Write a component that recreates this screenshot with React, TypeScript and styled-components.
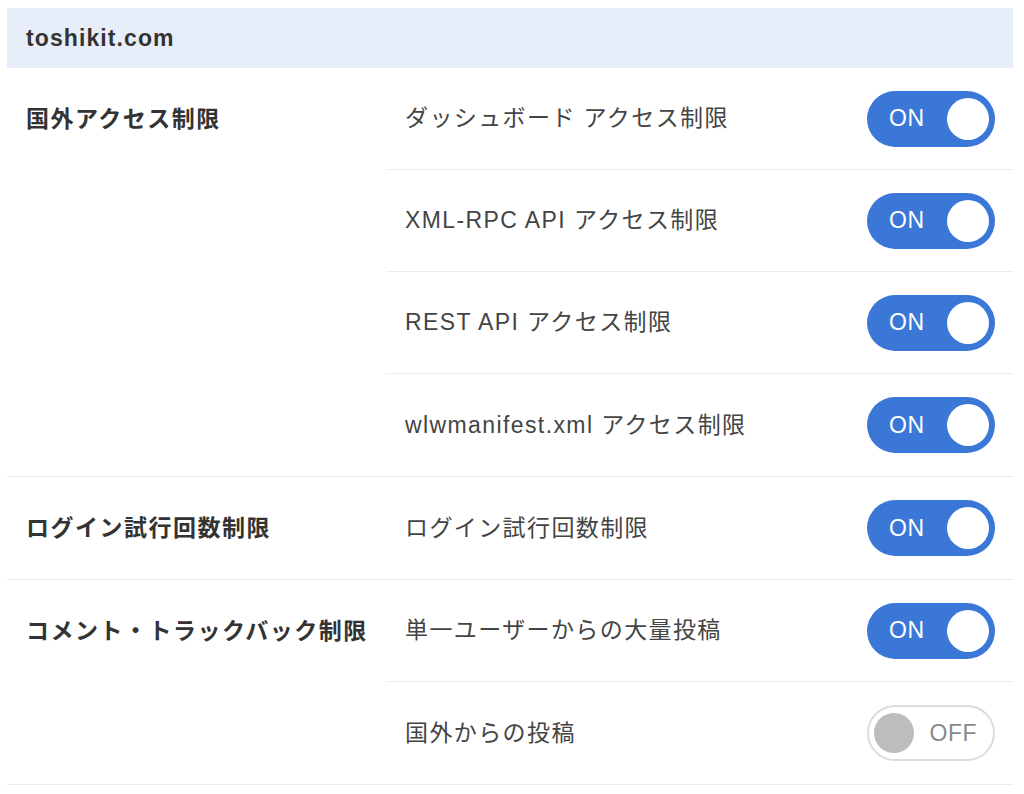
import React from 'react';
import styled, { createGlobalStyle } from 'styled-components';

const GlobalStyle = createGlobalStyle`
  body {
    margin: 0;
    background: #fff;
    font-family: "Liberation Sans", "Noto Sans CJK JP", sans-serif;
  }
`;

type Item = { label: string; on: boolean };
type Group = { title: string; items: Item[] };

const groups: Group[] = [
  {
    title: '国外アクセス制限',
    items: [
      { label: 'ダッシュボード アクセス制限', on: true },
      { label: 'XML-RPC API アクセス制限', on: true },
      { label: 'REST API アクセス制限', on: true },
      { label: 'wlwmanifest.xml アクセス制限', on: true },
    ],
  },
  {
    title: 'ログイン試行回数制限',
    items: [{ label: 'ログイン試行回数制限', on: true }],
  },
  {
    title: 'コメント・トラックバック制限',
    items: [
      { label: '単一ユーザーからの大量投稿', on: true },
      { label: '国外からの投稿', on: false },
    ],
  },
];

function Toggle({ on }: { on: boolean }) {
  return (
    <Switch $on={on}>
      <SwitchText $on={on}>{on ? 'ON' : 'OFF'}</SwitchText>
      <Knob $on={on} />
    </Switch>
  );
}

function App() {
  return (
    <>
      <GlobalStyle />
      <Panel>
        <Header>toshikit.com</Header>
        {groups.map((g) => (
          <Section key={g.title}>
            <GroupTitle>{g.title}</GroupTitle>
            <Items>
              {g.items.map((it) => (
                <Row key={it.label}>
                  <RowLabel>{it.label}</RowLabel>
                  <Toggle on={it.on} />
                </Row>
              ))}
            </Items>
          </Section>
        ))}
      </Panel>
    </>
  );
}

const Panel = styled.div`
  width: 1006px;
  margin: 8px 0 0 7px;
`;

const Header = styled.div`
  height: 60px;
  display: flex;
  align-items: center;
  padding-left: 19px;
  background: #e8eef9;
  color: #333;
  font-size: 23px;
  font-weight: bold;
  letter-spacing: 1.1px;
`;

const Section = styled.div`
  display: grid;
  grid-template-columns: 379px 1fr;
  border-bottom: 1px solid #ececec;
`;

const GroupTitle = styled.div`
  box-sizing: border-box;
  height: 102px;
  display: flex;
  align-items: center;
  padding: 0 0 5px 19px;
  color: #333;
  font-size: 23px;
  font-weight: bold;
  letter-spacing: 1.5px;
`;

const Items = styled.div`
  display: flex;
  flex-direction: column;
`;

const Row = styled.div`
  box-sizing: border-box;
  height: 102px;
  display: flex;
  align-items: center;
  justify-content: space-between;
  padding: 0 18px 0 19px;
  border-bottom: 1px solid #ececec;

  &:last-child {
    border-bottom: none;
  }
`;

const RowLabel = styled.span`
  color: #444;
  font-size: 23px;
  letter-spacing: 1.4px;
  margin-bottom: 5px;
`;

const Switch = styled.div<{ $on: boolean }>`
  box-sizing: border-box;
  width: 128px;
  height: 56px;
  border-radius: 28px;
  display: flex;
  align-items: center;
  flex-direction: ${(p) => (p.$on ? 'row' : 'row-reverse')};
  justify-content: space-between;
  padding: ${(p) => (p.$on ? '0 6px 0 22px' : '0 16px 0 5px')};
  background: ${(p) => (p.$on ? '#3b77d7' : '#fff')};
  border: ${(p) => (p.$on ? 'none' : '2px solid #dcdcdc')};
`;

const SwitchText = styled.span<{ $on: boolean }>`
  color: ${(p) => (p.$on ? '#fff' : '#8a8a8a')};
  font-size: 23px;
  letter-spacing: 0.5px;
`;

const Knob = styled.span<{ $on: boolean }>`
  width: ${(p) => (p.$on ? '42px' : '40px')};
  height: ${(p) => (p.$on ? '42px' : '40px')};
  border-radius: 50%;
  background: ${(p) => (p.$on ? '#fff' : '#bdbdbd')};
`;

export default App;
